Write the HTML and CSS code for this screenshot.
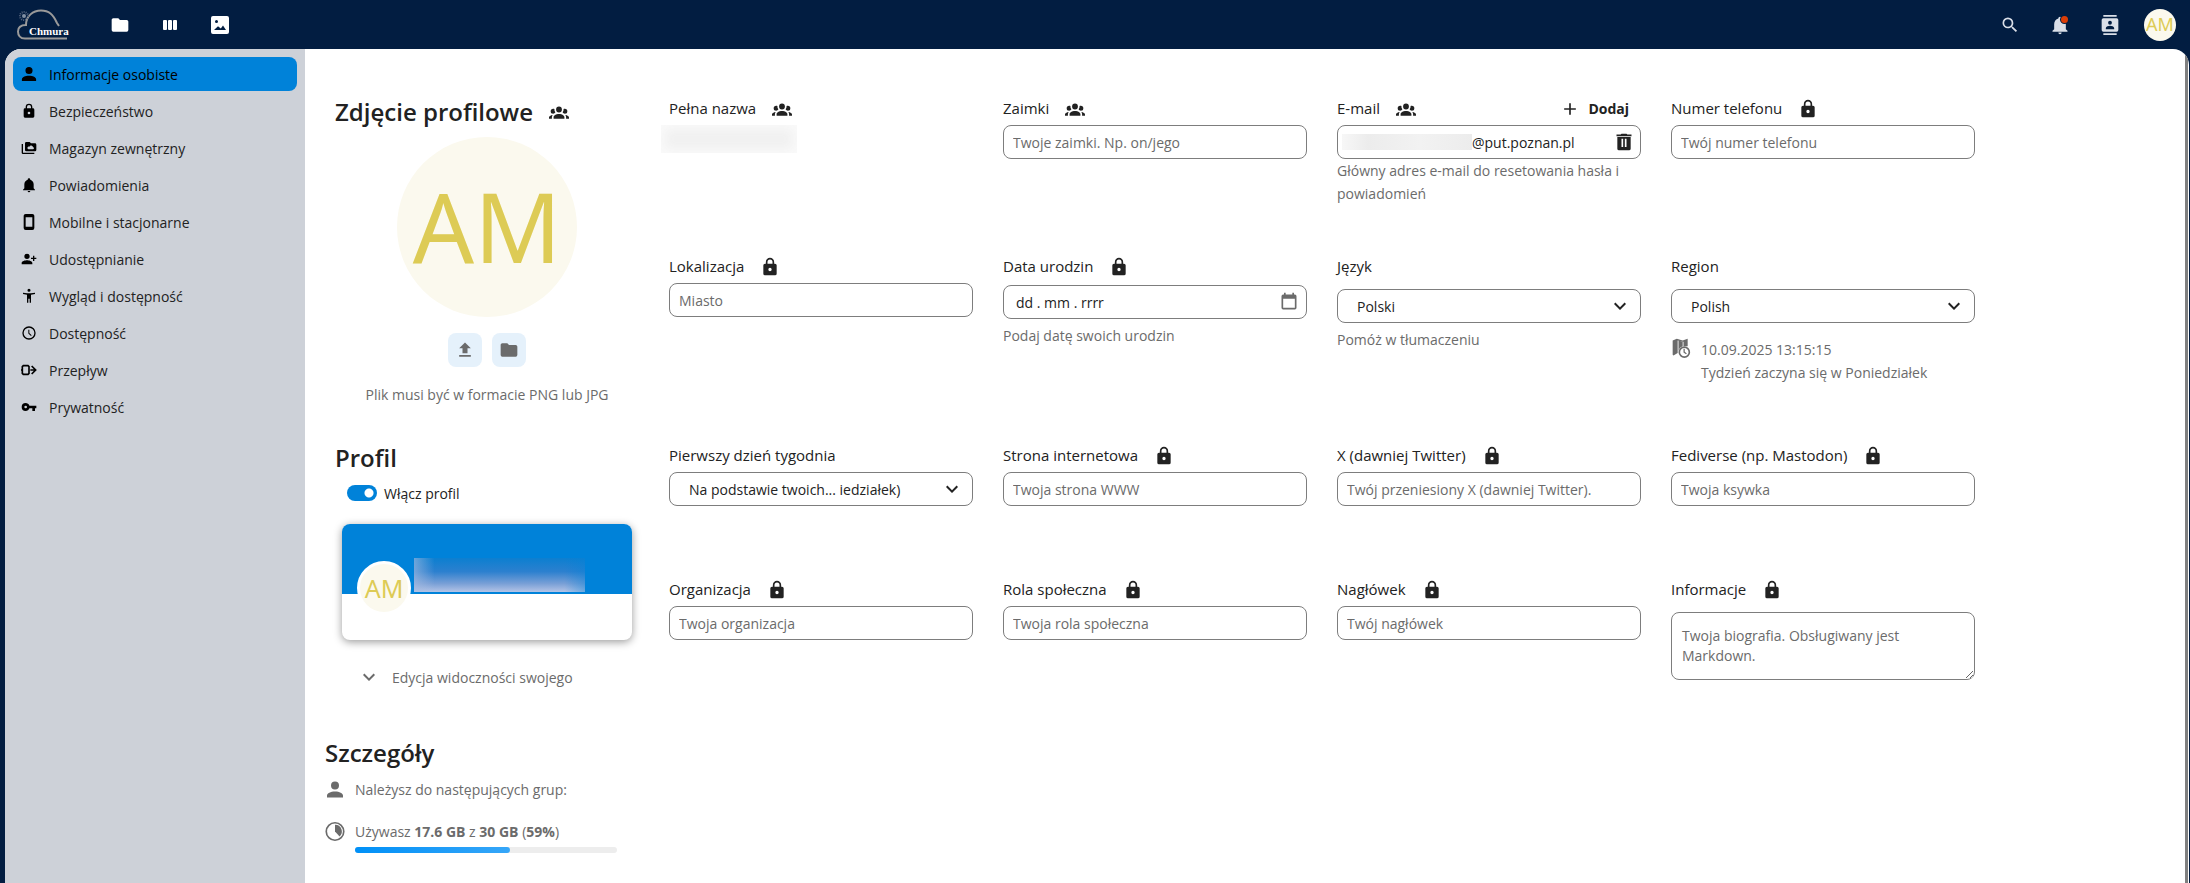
FILE: index.html
```html
<!DOCTYPE html>
<html lang="pl">

<head>
  <meta charset="UTF-8">
  <meta name="viewport" content="width=device-width, initial-scale=1.0">
  <title>Informacje osobiste - Chmura</title>
  <link rel="stylesheet" href="styles.css">
</head>

<body>
  <!-- icon set -->
  <svg class="sprite" aria-hidden="true">
    <symbol id="account" viewBox="3 3 18 18"><path d="M12,4A4,4 0 0,1 16,8A4,4 0 0,1 12,12A4,4 0 0,1 8,8A4,4 0 0,1 12,4M12,14C16.42,14 20,15.79 20,18V20H4V18C4,15.79 7.58,14 12,14Z"/></symbol>
    <symbol id="lock" viewBox="0 0 24 24"><path fill-rule="evenodd" d="M12,17A2,2 0 0,0 14,15A2,2 0 0,0 10,15A2,2 0 0,0 12,17M18,8A2,2 0 0,1 20,10V20A2,2 0 0,1 18,22H6A2,2 0 0,1 4,20V10A2,2 0 0,1 6,8H7V6A5,5 0 0,1 17,6V8H18M12,3A3,3 0 0,0 9,6V8H15V6A3,3 0 0,0 12,3Z"/></symbol>
    <symbol id="group" viewBox="0 0 24 24"><path d="M12,5.5A3.5,3.5 0 0,1 15.5,9A3.5,3.5 0 0,1 12,12.5A3.5,3.5 0 0,1 8.5,9A3.5,3.5 0 0,1 12,5.5M5,8C5.56,8 6.08,8.15 6.53,8.42C6.38,9.85 6.8,11.27 7.66,12.38C7.16,13.34 6.16,14 5,14A3,3 0 0,1 2,11A3,3 0 0,1 5,8M19,8A3,3 0 0,1 22,11A3,3 0 0,1 19,14C17.84,14 16.84,13.34 16.34,12.38C17.2,11.27 17.62,9.85 17.47,8.42C17.92,8.15 18.44,8 19,8M5.5,18.25C5.5,16.18 8.41,14.5 12,14.5C15.59,14.5 18.5,16.18 18.5,18.25V20H5.5V18.25M0,20V18.5C0,17.11 1.89,15.94 4.45,15.6C3.86,16.28 3.5,17.22 3.5,18.25V20H0M24,20H20.5V18.25C20.5,17.22 20.14,16.28 19.55,15.6C22.11,15.94 24,17.11 24,18.5V20Z"/></symbol>
    <symbol id="folder" viewBox="0 0 24 24"><path d="M10,4H4C2.89,4 2,4.89 2,6V18A2,2 0 0,0 4,20H20A2,2 0 0,0 22,18V8C22,6.89 21.1,6 20,6H12L10,4Z"/></symbol>
    <symbol id="columns" viewBox="0 0 20 20"><rect x="3" y="5" width="4" height="10" rx="1"/><rect x="8" y="5" width="4" height="10" rx="1"/><rect x="13" y="5" width="4" height="10" rx="1"/></symbol>
    <symbol id="image" viewBox="1 1 18 18"><path fill-rule="evenodd" d="M3,1H17A2,2 0 0,1 19,3V17A2,2 0 0,1 17,19H3A2,2 0 0,1 1,17V3A2,2 0 0,1 3,1M4,15H16L13,10.5L10.8,13.5L8,11.2ZM6.5,5A1.5,1.5 0 0,0 6.5,8A1.5,1.5 0 0,0 6.5,5Z"/></symbol>
    <symbol id="magnify" viewBox="0 0 24 24"><path d="M9.5,3A6.5,6.5 0 0,1 16,9.5C16,11.11 15.41,12.59 14.44,13.73L14.71,14H15.5L20.5,19L19,20.5L14,15.5V14.71L13.73,14.44C12.59,15.41 11.11,16 9.5,16A6.5,6.5 0 0,1 3,9.5A6.5,6.5 0 0,1 9.5,3M9.5,5C7,5 5,7 5,9.5C5,12 7,14 9.5,14C12,14 14,12 14,9.5C14,7 12,5 9.5,5Z"/></symbol>
    <symbol id="bell" viewBox="0 0 24 24"><path d="M21,19V20H3V19L5,17V11C5,7.9 7.03,5.17 10,4.29C10,4.19 10,4.1 10,4A2,2 0 0,1 12,2A2,2 0 0,1 14,4C14,4.1 14,4.19 14,4.29C16.97,5.17 19,7.9 19,11V17L21,19M14,21A2,2 0 0,1 12,23A2,2 0 0,1 10,21"/></symbol>
    <symbol id="contacts" viewBox="0 0 24 24"><path fill-rule="evenodd" d="M4,4H20A2,2 0 0,1 22,6V18A2,2 0 0,1 20,20H4A2,2 0 0,1 2,18V6A2,2 0 0,1 4,4M12,7A2.3,2.3 0 0,0 12,11.6A2.3,2.3 0 0,0 12,7M7,17H17V15.5C17,13.8 13.7,12.9 12,12.9S7,13.8 7,15.5ZM4,0H20V2H4ZM4,22H20V24H4Z"/></symbol>
    <symbol id="storage" viewBox="0 0 24 24"><path fill-rule="evenodd" d="M8,3H13L15,5H21A2,2 0 0,1 23,7V15A2,2 0 0,1 21,17H8A2,2 0 0,1 6,15V5A2,2 0 0,1 8,3M11,14H18A1.8,1.8 0 0,0 18,10.5A3,3 0 0,0 12.500,10A2,2 0 0,0 11,14Z"/><path d="M1,6H3V19H20V21H3A2,2 0 0,1 1,19Z"/></symbol>
    <symbol id="phone" viewBox="0 0 24 24"><path d="M17,19H7V5H17M17,0H7C5.3,0 4,1.3 4,3V21A3,3 0 0,0 7,24H17A3,3 0 0,0 20,21V3C20,1.3 18.7,0 17,0Z" fill-rule="evenodd"/></symbol>
    <symbol id="account-plus" viewBox="0 0 24 24"><path transform="matrix(-1 0 0 1 24 0)" d="M15,14C12.33,14 7,15.33 7,18V20H23V18C23,15.33 17.67,14 15,14M6,10V7H4V10H1V12H4V15H6V12H9V10M15,12A4,4 0 0,0 19,8A4,4 0 0,0 15,4A4,4 0 0,0 11,8A4,4 0 0,0 15,12Z"/></symbol>
    <symbol id="human" viewBox="0 0 24 24"><path d="M12,1A2.3,2.3 0 0,1 12,5.6A2.3,2.3 0 0,1 12,1M21,9L15,10V22H13V16H11V22H9V10L3,9V7L9,8H15L21,7Z"/></symbol>
    <symbol id="clock" viewBox="0 0 24 24"><path d="M12,2A10,10 0 0,1 12,22A10,10 0 0,1 12,2M12,4A8,8 0 0,0 12,20A8,8 0 0,0 12,4M11,7H12.5V12L16,15.5L15,16.5L11,12.7Z" fill-rule="evenodd"/></symbol>
    <symbol id="flow" viewBox="0 0 24 24"><path fill="none" stroke="currentColor" stroke-width="2.500" d="M3.500,5.500H10.500L12,7V17L10.500,18.500H3.500L2,17V7ZM0,12H2M14,12H22M16,6L22,12L16,18"/></symbol>
    <symbol id="key" viewBox="0 0 24 24"><path d="M7,14A2,2 0 0,1 5,12A2,2 0 0,1 7,10A2,2 0 0,1 9,12A2,2 0 0,1 7,14M12.65,10C11.83,7.67 9.61,6 7,6A6,6 0 0,0 1,12A6,6 0 0,0 7,18C9.61,18 11.83,16.33 12.65,14H17V18H21V14H23V10H12.65Z"/></symbol>
    <symbol id="upload" viewBox="0 0 24 24"><path d="M9,16V10H5L12,3L19,10H15V16H9M5,20V18H19V20H5Z"/></symbol>
    <symbol id="chevron" viewBox="0 0 24 24"><path d="M7.41,8.58L12,13.17L16.59,8.58L18,10L12,16L6,10L7.41,8.58Z"/></symbol>
    <symbol id="plus" viewBox="0 0 24 24"><path d="M19,13H13V19H11V13H5V11H11V5H13V11H19V13Z"/></symbol>
    <symbol id="trash" viewBox="0 0 24 24"><path fill-rule="evenodd" d="M3,3H8L9,2H15L16,3H21V5H3ZM4,6H20V20A2,2 0 0,1 18,22H6A2,2 0 0,1 4,20ZM9,8V18H11V8ZM13,8V18H15V8Z"/></symbol>
    <symbol id="calendar" viewBox="0 0 24 24"><path fill-rule="evenodd" d="M19,3H18V1H16V3H8V1H6V3H5A2,2 0 0,0 3,5V19A2,2 0 0,0 5,21H19A2,2 0 0,0 21,19V5A2,2 0 0,0 19,3M19,19H5V8H19Z"/></symbol>
    <symbol id="map-clock" viewBox="0 0 24 24"><path d="M2,3L7,1L14,3L20,1V10H15V4.500L14,4.500L8,3V18L3,21L2,20Z"/><path d="M9,3L14,4.500V10A8,8 0 0,0 9,18Z"/><circle cx="16" cy="17" r="6" fill="#fff" stroke="currentColor" stroke-width="2"/><path d="M15,13H16.500V16.500L19,18.500L18,19.500L15,17.500Z"/></symbol>
    <symbol id="quota" viewBox="0 0 24 24"><circle cx="12" cy="12" r="10.500" fill="none" stroke="currentColor" stroke-width="2"/><path d="M12,4A8,8 0 0,1 17.500,18L12,12Z"/></symbol>
  </svg>

  <header class="header">
    <a class="logo" href="#" aria-label="Chmura">
      <svg viewBox="0 0 52 32" width="52" height="32">
        <path d="M50 29.500H8C3 29.500 1 26 1 22.500C1 18.500 4 16 9 16C9 7 16 1.500 24 1.500C32 1.500 36 5.500 40 14L42 17" fill="none" stroke="#9a9a9a" stroke-width="2"/>
        <circle cx="7" cy="7" r="4" fill="none" stroke="#54637c" stroke-width="2" stroke-dasharray="1 1"/>
        <circle cx="7" cy="7" r="2" fill="#8290a3"/>
        <text x="12" y="26">Chmura</text>
      </svg>
    </a>
    <nav class="apps">
      <a href="#" aria-label="Pliki"><svg class="icon"><use href="#folder"/></svg></a>
      <a href="#" aria-label="Tablica"><svg class="icon"><use href="#columns"/></svg></a>
      <a href="#" aria-label="Zdjęcia"><svg class="icon icon-small"><use href="#image"/></svg></a>
    </nav>
    <div class="header-end">
      <button type="button" aria-label="Szukaj"><svg class="icon"><use href="#magnify"/></svg></button>
      <button type="button" aria-label="Powiadomienia" class="bell"><svg class="icon"><use href="#bell"/></svg></button>
      <button type="button" aria-label="Kontakty"><svg class="icon"><use href="#contacts"/></svg></button>
      <button type="button" aria-label="Ustawienia"><span class="avatar avatar-small">AM</span></button>
    </div>
  </header>

  <div class="content">
    <nav class="sidebar">
      <a href="#" class="active"><svg class="icon"><use href="#account"/></svg>Informacje osobiste</a>
      <a href="#"><svg class="icon"><use href="#lock"/></svg>Bezpieczeństwo</a>
      <a href="#"><svg class="icon"><use href="#storage"/></svg>Magazyn zewnętrzny</a>
      <a href="#"><svg class="icon"><use href="#bell"/></svg>Powiadomienia</a>
      <a href="#"><svg class="icon"><use href="#phone"/></svg>Mobilne i stacjonarne</a>
      <a href="#"><svg class="icon"><use href="#account-plus"/></svg>Udostępnianie</a>
      <a href="#"><svg class="icon"><use href="#human"/></svg>Wygląd i dostępność</a>
      <a href="#"><svg class="icon"><use href="#clock"/></svg>Dostępność</a>
      <a href="#"><svg class="icon"><use href="#flow"/></svg>Przepływ</a>
      <a href="#"><svg class="icon"><use href="#key"/></svg>Prywatność</a>
    </nav>

    <main class="main">
      <div class="settings">
        <section class="photo">
          <h2>Zdjęcie profilowe <svg class="icon"><use href="#group"/></svg></h2>
          <div class="avatar avatar-large">AM</div>
          <div class="photo-buttons">
            <button type="button" aria-label="Wyślij zdjęcie"><svg class="icon"><use href="#upload"/></svg></button>
            <button type="button" aria-label="Wybierz z plików"><svg class="icon"><use href="#folder"/></svg></button>
          </div>
          <p>Plik musi być w formacie PNG lub JPG</p>
        </section>

        <section class="field">
          <div class="field-head"><span>Pełna nazwa</span><svg class="icon"><use href="#group"/></svg></div>
          <div class="hidden-name"></div>
        </section>
        <section class="field">
          <div class="field-head"><label for="pronouns">Zaimki</label><svg class="icon"><use href="#group"/></svg></div>
          <input id="pronouns" type="text" placeholder="Twoje zaimki. Np. on/jego">
        </section>
        <section class="field">
          <div class="field-head"><label for="email">E-mail</label><svg class="icon"><use href="#group"/></svg>
            <button type="button" class="add"><svg class="icon"><use href="#plus"/></svg>Dodaj</button>
          </div>
          <div class="box email">
            <span class="hidden-email"></span>
            <input id="email" type="text" value="@put.poznan.pl">
            <button type="button" aria-label="Usuń"><svg class="icon"><use href="#trash"/></svg></button>
          </div>
          <p class="email-hint">Główny adres e-mail do resetowania hasła i powiadomień</p>
        </section>
        <section class="field">
          <div class="field-head"><label for="phone-number">Numer telefonu</label><svg class="icon"><use href="#lock"/></svg></div>
          <input id="phone-number" type="tel" placeholder="Twój numer telefonu">
        </section>

        <section class="field">
          <div class="field-head"><label for="location">Lokalizacja</label><svg class="icon"><use href="#lock"/></svg></div>
          <input id="location" type="text" placeholder="Miasto">
        </section>
        <section class="field">
          <div class="field-head"><label for="birthday">Data urodzin</label><svg class="icon"><use href="#lock"/></svg></div>
          <div class="box date">
            <input id="birthday" type="text" placeholder="dd . mm . rrrr">
            <button type="button" aria-label="Kalendarz"><svg class="icon"><use href="#calendar"/></svg></button>
          </div>
          <p class="hint">Podaj datę swoich urodzin</p>
        </section>
        <section class="field">
          <div class="field-head"><label for="language">Język</label></div>
          <div class="box select spaced">
            <select id="language"><option>Polski</option></select>
            <svg class="icon"><use href="#chevron"/></svg>
          </div>
          <a href="#" class="hint">Pomóż w tłumaczeniu</a>
        </section>
        <section class="field">
          <div class="field-head"><label for="region">Region</label></div>
          <div class="box select spaced">
            <select id="region"><option>Polish</option></select>
            <svg class="icon"><use href="#chevron"/></svg>
          </div>
          <div class="preview">
            <svg class="icon"><use href="#map-clock"/></svg>
            <p>10.09.2025 13:15:15<br>Tydzień zaczyna się w Poniedziałek</p>
          </div>
        </section>

        <section class="profile">
          <h2>Profil</h2>
          <label class="switch"><input type="checkbox" checked>Włącz profil</label>
          <a href="#" class="card" aria-label="Twój profil">
            <span class="card-top"></span>
            <span class="avatar avatar-card">AM</span>
            <span class="card-name"></span>
          </a>
          <a href="#" class="visibility"><svg class="icon"><use href="#chevron"/></svg>Edycja widoczności swojego</a>
        </section>

        <section class="field">
          <div class="field-head"><label for="first-day">Pierwszy dzień tygodnia</label></div>
          <div class="box select">
            <select id="first-day"><option>Na podstawie twoich... iedziałek)</option></select>
            <svg class="icon"><use href="#chevron"/></svg>
          </div>
        </section>
        <section class="field">
          <div class="field-head"><label for="website">Strona internetowa</label><svg class="icon"><use href="#lock"/></svg></div>
          <input id="website" type="url" placeholder="Twoja strona WWW">
        </section>
        <section class="field">
          <div class="field-head"><label for="twitter">X (dawniej Twitter)</label><svg class="icon"><use href="#lock"/></svg></div>
          <input id="twitter" type="text" placeholder="Twój przeniesiony X (dawniej Twitter).">
        </section>
        <section class="field">
          <div class="field-head"><label for="fediverse">Fediverse (np. Mastodon)</label><svg class="icon"><use href="#lock"/></svg></div>
          <input id="fediverse" type="text" placeholder="Twoja ksywka">
        </section>

        <section class="field">
          <div class="field-head"><label for="organisation">Organizacja</label><svg class="icon"><use href="#lock"/></svg></div>
          <input id="organisation" type="text" placeholder="Twoja organizacja">
        </section>
        <section class="field">
          <div class="field-head"><label for="role">Rola społeczna</label><svg class="icon"><use href="#lock"/></svg></div>
          <input id="role" type="text" placeholder="Twoja rola społeczna">
        </section>
        <section class="field">
          <div class="field-head"><label for="headline">Nagłówek</label><svg class="icon"><use href="#lock"/></svg></div>
          <input id="headline" type="text" placeholder="Twój nagłówek">
        </section>
        <section class="field">
          <div class="field-head"><label for="about">Informacje</label><svg class="icon"><use href="#lock"/></svg></div>
          <textarea id="about" class="spaced" placeholder="Twoja biografia. Obsługiwany jest Markdown."></textarea>
        </section>
      </div>

      <section class="details">
        <h2>Szczegóły</h2>
        <div class="detail">
          <svg class="icon icon-small"><use href="#account"/></svg>
          <p>Należysz do następujących grup:</p>
        </div>
        <div class="detail">
          <svg class="icon"><use href="#quota"/></svg>
          <div class="quota">
            <p>Używasz <strong>17.6 GB</strong> z <strong>30 GB</strong> (<strong>59%</strong>)</p>
            <div class="bar"><div class="bar-fill" style="width: 59%"></div></div>
          </div>
        </div>
      </section>
    </main>
  </div>
</body>

</html>
```
FILE: styles.css
```css
*,
*::before,
*::after {
  margin: 0;
  padding: 0;
  box-sizing: border-box;
}

body {
  height: 100vh;
  display: flex;
  flex-direction: column;
  overflow: hidden;
  background: #021d41;
  color: #222;
  font: 14px/23px "Open Sans", "Noto Sans", sans-serif;
}

input,
select,
textarea,
button {
  font: inherit;
  color: inherit;
  border: none;
  background: none;
  outline: none;
}

a {
  color: inherit;
  text-decoration: none;
}

h2 {
  font-size: 24px;
  font-weight: 600;
  line-height: 36px;
}

.sprite {
  display: none;
}

.icon {
  width: 20px;
  height: 20px;
  flex: none;
  fill: currentColor;
}

.icon-small {
  width: 18px;
  height: 18px;
}

.avatar {
  display: flex;
  align-items: center;
  justify-content: center;
  flex: none;
  border-radius: 50%;
  background: #fbf9ee;
  color: #ddcb55;
  font-family: "Noto Sans", sans-serif;
}

.avatar-small {
  width: 32px;
  height: 32px;
  font-size: 18px;
}

.avatar-large {
  width: 180px;
  height: 180px;
  padding-bottom: 4px;
  font-size: 96px;
}

/* top bar */
.header {
  display: flex;
  align-items: center;
  height: 49px;
  flex: none;
  padding: 0 5px 0 17px;
  color: #fff;
}

.logo {
  width: 78px;
  height: 32px;
}

.logo svg {
  overflow: visible;
}

.logo text {
  fill: #fff;
  font: bold 11px "Liberation Serif", serif;
}

.apps,
.header-end {
  display: flex;
}

.apps a,
.header-end button {
  display: flex;
  align-items: center;
  justify-content: center;
  width: 50px;
  height: 49px;
}

.header-end {
  margin-left: auto;
  color: #dadfe8;
}

.bell {
  position: relative;
}

.bell::after {
  content: "";
  position: absolute;
  top: 16px;
  right: 17px;
  width: 7px;
  height: 7px;
  border-radius: 50%;
  background: #db3d06;
  box-shadow: 0 0 0 1px #021d41;
}

.content {
  display: flex;
  flex: 1;
  min-height: 0;
  margin: 0 1px 0 5px;
  padding-right: 1px;
  border-radius: 16px 16px 0 0;
  background: #fff;
  overflow: hidden;
}

.sidebar {
  display: flex;
  flex-direction: column;
  gap: 3px;
  flex: none;
  width: 300px;
  padding: 8px;
  background: #cdd1d8;
}

.sidebar a {
  display: flex;
  align-items: center;
  gap: 12px;
  height: 34px;
  padding: 0 8px;
  border-radius: 8px;
}

.sidebar .icon {
  width: 16px;
  height: 16px;
  color: #000;
}

.sidebar .active {
  background: #0082d9;
  color: #000;
}

.main {
  flex: 1;
  min-width: 0;
  padding: 43px 20px 0;
  border-right: 3px solid #808080;
}

.settings {
  display: grid;
  grid-template-columns: repeat(5, minmax(0, 1fr));
  grid-template-rows: 128px 159px 104px 116px;
  gap: 30px;
  max-width: 1660px;
  padding: 0 10px;
}

.photo,
.profile {
  grid-row: span 2;
}

.photo {
  display: flex;
  flex-direction: column;
  align-items: center;
  padding-top: 2px;
  color: #6b6b6b;
}

.photo h2 {
  display: flex;
  align-items: center;
  gap: 16px;
  align-self: stretch;
  margin-bottom: 7px;
  color: #222;
}

.photo-buttons {
  display: flex;
  gap: 10px;
  margin: 16px 0;
}

.photo-buttons button {
  display: flex;
  align-items: center;
  justify-content: center;
  width: 34px;
  height: 34px;
  border-radius: 8px;
  background: #e5f1fb;
}

/* form fields */
.field-head {
  display: flex;
  align-items: center;
  gap: 16px;
  height: 33px;
  font-size: 15px;
}

.add {
  display: flex;
  align-items: center;
  gap: 8px;
  margin-left: auto;
  padding-right: 12px;
  font-size: 14px;
  font-weight: 700;
}

.field > input,
.field > textarea,
.box {
  display: flex;
  align-items: center;
  width: 100%;
  height: 34px;
  padding: 0 9px;
  border: 1px solid #7d7d7d;
  border-radius: 8px;
  background: #fff;
}

.field ::placeholder {
  color: #6b6b6b;
}

.field > textarea {
  display: block;
  height: 68px;
  padding: 13px 10px;
  line-height: 20px;
  resize: vertical;
}

.field > .spaced {
  margin-top: 6px;
}

.box input {
  flex: 1;
  min-width: 0;
}

.box button {
  display: flex;
}

.email {
  padding: 0 6px 0 4px;
}

.hidden-email {
  width: 130px;
  height: 16px;
  background: linear-gradient(90deg, #f7f7f7, #ececec 20%, #f2f2f2 60%, #ececec);
}

.hidden-name {
  width: 136px;
  height: 28px;
  margin-left: -8px;
  background: #f0f0f0;
  box-shadow: inset 0 0 12px 4px #fafafa;
}

.email-hint,
.hint,
.preview {
  color: #6b6b6b;
}

.hint {
  display: block;
  margin-top: 5px;
}

.field > .date {
  margin-top: 2px;
  padding: 0 7px 0 12px;
}

.field .date ::placeholder {
  color: #222;
}

.date button {
  color: #6b6b6b;
}

.field > .select {
  position: relative;
  padding: 0;
}

.select select {
  width: 100%;
  height: 32px;
  padding: 0 40px 0 19px;
  appearance: none;
}

.select .icon {
  position: absolute;
  right: 8px;
  width: 24px;
  height: 24px;
  pointer-events: none;
}

.preview {
  display: flex;
  gap: 10px;
  margin-top: 15px;
}

.switch {
  display: flex;
  align-items: center;
  gap: 7px;
  height: 34px;
  padding-left: 12px;
}

.profile h2 {
  margin-top: 1px;
}

.switch input {
  appearance: none;
  width: 30px;
  height: 16px;
  border-radius: 8px;
  background: radial-gradient(circle at 22px 8px, #fff 4px, #0082d9 5px);
}

.card {
  position: relative;
  display: block;
  height: 116px;
  margin: 14px 7px 0;
  border-radius: 8px;
  background: #fff;
  box-shadow: 0 2px 9px rgba(0, 0, 0, 0.4);
}

.card-top {
  display: block;
  height: 70px;
  border-radius: 8px 8px 0 0;
  background: #0082d9;
}

.avatar-card {
  position: absolute;
  top: 37px;
  left: 15px;
  width: 54px;
  height: 54px;
  border: 3px solid #fff;
  font-size: 25px;
}

.card-name {
  position: absolute;
  top: 34px;
  left: 72px;
  width: 171px;
  height: 34px;
  background:
    linear-gradient(90deg, rgba(170, 190, 225, 0.6), transparent 12%, transparent 88%, rgba(0, 130, 217, 0.4)),
    linear-gradient(#0c7fd0, #2c80cf 40%, #789fd6 75%, #b4c4e6);
}

.visibility {
  display: flex;
  align-items: center;
  gap: 11px;
  height: 34px;
  margin: 20px 0 0 22px;
  color: #6b6b6b;
}

.visibility .icon {
  width: 24px;
  height: 24px;
}

.details {
  margin-top: 46px;
  color: #6b6b6b;
}

.details h2 {
  margin-bottom: 7px;
  color: #222;
}

.detail {
  display: flex;
  gap: 10px;
  margin-bottom: 19px;
}

.detail .icon {
  width: 20px;
  height: 23px;
}

.detail .icon-small {
  padding: 0 1px;
}

.quota {
  width: 262px;
}

.bar {
  height: 6px;
  margin-top: 4px;
  border-radius: 3px;
  background: #ededed;
}

.bar-fill {
  height: 6px;
  border-radius: 3px;
  background: linear-gradient(90deg, #0090f7, #36a6f8);
}
```
